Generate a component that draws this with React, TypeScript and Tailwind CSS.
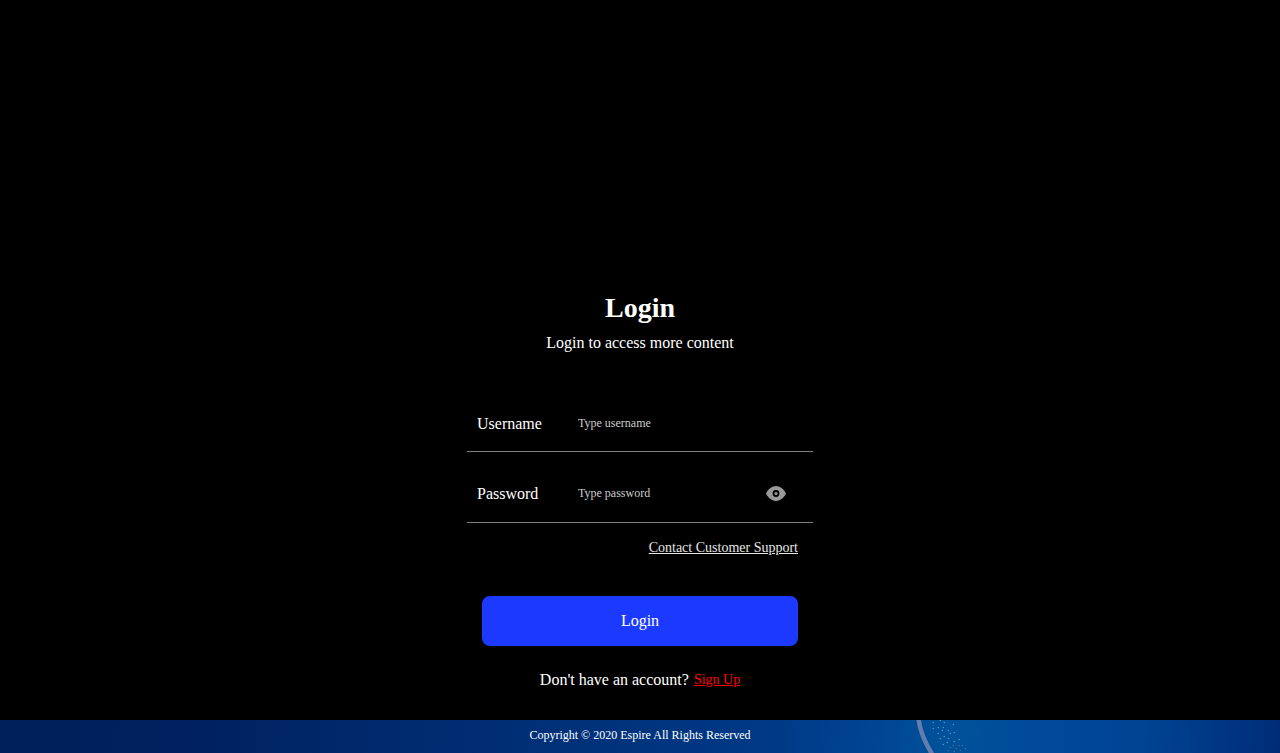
import { useState } from "react";

const dots = [
  [43, 3], [50, 1], [54, 3], [63, 5], [43, 9], [48, 8], [53, 8], [52, 11],
  [58, 11], [64, 13], [48, 14], [54, 17], [60, 14], [50, 19], [58, 19],
  [64, 22], [69, 20], [57, 23], [53, 25],
];

const faintDots = [
  [60, 28], [63, 26], [66, 29], [69, 26], [72, 26], [75, 29], [58, 31], [64, 32], [70, 31],
];

function EyeIcon() {
  return (
    <svg width="20" height="15" viewBox="0 0 20 15" fill="#999999" aria-hidden="true">
      <path
        fillRule="evenodd"
        d="M10 0C6 0 2.500 2.800 0 7.500 2.500 12.200 6 15 10 15s7.500-2.800 10-7.500C17.500 2.800 14 0 10 0Zm0 10.900a3.400 3.400 0 1 1 0-6.800 3.400 3.400 0 0 1 0 6.800Z"
      />
      <circle cx="10" cy="7.500" r="1.600" />
    </svg>
  );
}

function FooterArt() {
  return (
    <svg
      className="absolute top-0 left-[68.3%]"
      width="110"
      height="33"
      viewBox="0 0 110 33"
      aria-hidden="true"
    >
      <path d="M44.500 -1C46 11 50 21 58 34" stroke="#637dad" strokeWidth="4.500" fill="none" />
      {dots.map(([x, y]) => (
        <circle key={`${x}-${y}`} cx={x + 16.3} cy={y - 0.5} r="0.8" fill="#4f95c2" />
      ))}
      {faintDots.map(([x, y]) => (
        <circle key={`${x}-${y}`} cx={x + 16.3} cy={y - 0.5} r="0.8" fill="#4c6a90" />
      ))}
    </svg>
  );
}

const inputStyle =
  "min-w-0 flex-1 bg-transparent pb-0.5 text-xs text-white outline-none placeholder:text-[#cccccc]";

export default function App() {
  const [visible, setVisible] = useState(false);

  return (
    <div className="flex min-h-screen flex-col bg-black font-['Liberation_Serif',serif] text-base text-white">
      <main className="flex flex-1 flex-col items-center justify-end pb-7">
        <h1 className="text-[28px] leading-8 font-bold">Login</h1>
        <p className="mt-[7px]">Login to access more content</p>

        <form
          className="mt-[41px] flex w-full max-w-[346px] flex-col"
          onSubmit={(event) => event.preventDefault()}
        >
          <div className="flex h-14 items-center border-b border-[#808080] px-[10px]">
            <label htmlFor="username" className="w-[101px]">Username</label>
            <input id="username" type="text" placeholder="Type username" className={inputStyle} />
          </div>
          <div className="mt-[15px] flex h-14 items-center border-b border-[#808080] pr-[27px] pb-0.5 pl-[10px]">
            <label htmlFor="password" className="w-[101px]">Password</label>
            <input
              id="password"
              type={visible ? "text" : "password"}
              placeholder="Type password"
              className={inputStyle}
            />
            <button type="button" aria-label="Show password" onClick={() => setVisible(!visible)}>
              <EyeIcon />
            </button>
          </div>
          <a href="#support" className="mt-[15px] mr-[15px] self-end text-sm text-[#e6e6e6] underline">
            Contact Customer Support
          </a>
          <button type="submit" className="mx-[15px] mt-[38px] h-[50px] rounded-lg bg-[#1c3aff]">
            Login
          </button>
        </form>

        <p className="mt-[22px] flex items-center gap-[5px]">
          <span>Don't have an account?</span>
          <a href="#signup" className="text-sm text-[#ff0000] underline">Sign Up</a>
        </p>
      </main>

      <footer className="relative overflow-hidden bg-[linear-gradient(95deg,#00205b_0%,#00205f_15%,#002a6d_30%,#003179_45%,#003985_60%,#004494_68%,#00529a_74%,#00489a_82%,#004493_89%,#002c77_100%)] pt-[5px] pb-2 text-center text-xs leading-5">
        <FooterArt />
        <p className="relative">Copyright © 2020 Espire All Rights Reserved</p>
      </footer>
    </div>
  );
}
